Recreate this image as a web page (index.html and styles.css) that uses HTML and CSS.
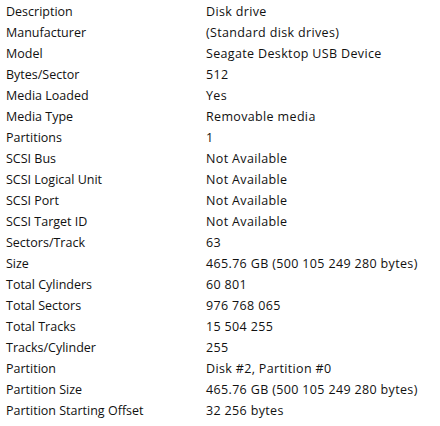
FILE: index.html
```html
<!DOCTYPE html>
<html>
<head>
<meta charset="utf-8">
<link rel="stylesheet" href="styles.css">
</head>
<body>
<div class="props">
  <div class="row"><span class="k">Description</span><span class="v">Disk drive</span></div>
  <div class="row"><span class="k">Manufacturer</span><span class="v">(Standard disk drives)</span></div>
  <div class="row"><span class="k">Model</span><span class="v">Seagate Desktop USB Device</span></div>
  <div class="row"><span class="k">Bytes/Sector</span><span class="v">512</span></div>
  <div class="row"><span class="k">Media Loaded</span><span class="v">Yes</span></div>
  <div class="row"><span class="k">Media Type</span><span class="v">Removable media</span></div>
  <div class="row"><span class="k">Partitions</span><span class="v">1</span></div>
  <div class="row"><span class="k">SCSI Bus</span><span class="v">Not Available</span></div>
  <div class="row"><span class="k">SCSI Logical Unit</span><span class="v">Not Available</span></div>
  <div class="row"><span class="k">SCSI Port</span><span class="v">Not Available</span></div>
  <div class="row"><span class="k">SCSI Target ID</span><span class="v">Not Available</span></div>
  <div class="row"><span class="k">Sectors/Track</span><span class="v">63</span></div>
  <div class="row"><span class="k">Size</span><span class="v">465.76 GB (500 105 249 280 bytes)</span></div>
  <div class="row"><span class="k">Total Cylinders</span><span class="v">60 801</span></div>
  <div class="row"><span class="k">Total Sectors</span><span class="v">976 768 065</span></div>
  <div class="row"><span class="k">Total Tracks</span><span class="v">15 504 255</span></div>
  <div class="row"><span class="k">Tracks/Cylinder</span><span class="v">255</span></div>
  <div class="row"><span class="k">Partition</span><span class="v">Disk #2, Partition #0</span></div>
  <div class="row"><span class="k">Partition Size</span><span class="v">465.76 GB (500 105 249 280 bytes)</span></div>
  <div class="row"><span class="k">Partition Starting Offset</span><span class="v">32 256 bytes</span></div>
</div>
</body>
</html>
```
FILE: styles.css
```css
html, body {
  margin: 0;
  padding: 0;
  background: #ffffff;
}
body {
  font-family: "Open Sans", "Noto Sans", sans-serif;
  font-size: 12.5px;
  color: #111;
}
.props {
  display: flex;
  flex-direction: column;
  padding-top: 1px;
}
.row {
  display: grid;
  grid-template-columns: 200px 1fr;
  height: 21px;
  line-height: 21px;
  white-space: nowrap;
}
.k {
  padding-left: 6px;
  letter-spacing: 0;
}
.v {
  padding-left: 6px;
  letter-spacing: 0.35px;
}
```
